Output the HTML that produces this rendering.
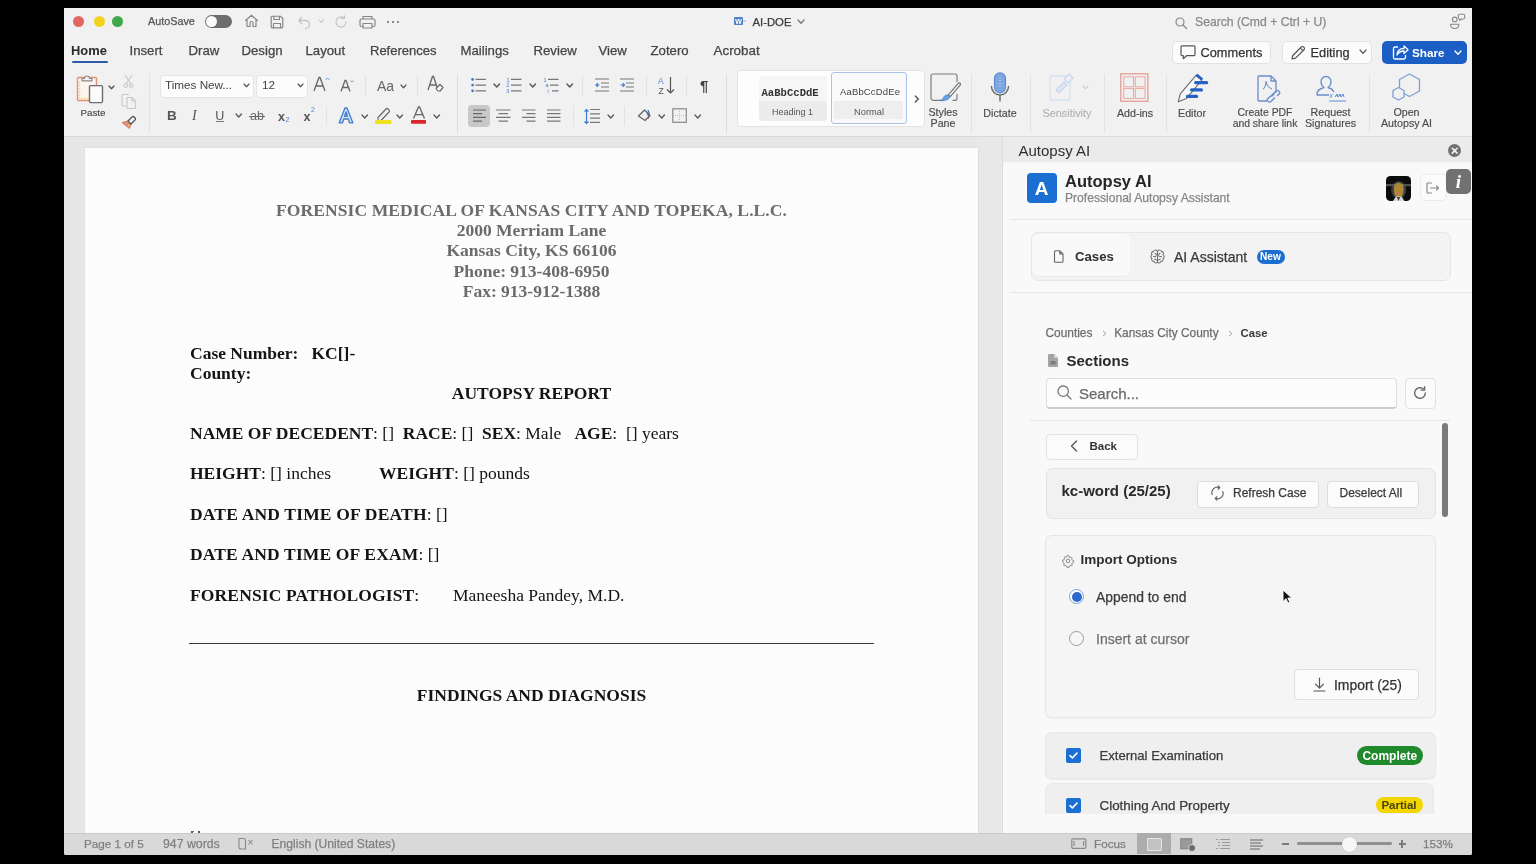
<!DOCTYPE html>
<html><head><meta charset="utf-8">
<style>
html,body{margin:0;padding:0;}
body{width:1536px;height:864px;overflow:hidden;background:#000;position:relative;font-family:"Liberation Sans",sans-serif;}
.a{position:absolute;}
.t{position:absolute;white-space:nowrap;font-family:"Liberation Sans",sans-serif;}
.s{position:absolute;white-space:pre;font-family:"Liberation Serif",serif;font-size:17.5px;line-height:20px;color:#141414;}
.s b{font-weight:bold;}
svg{position:absolute;overflow:visible;}
.sep{position:absolute;width:1px;background:#dcdcdc;}
.lbl{position:absolute;white-space:nowrap;font-size:10.7px;line-height:12px;color:#4a4a4a;text-align:center;-webkit-text-stroke:0.15px currentColor;}
.chev{position:absolute;}
.m{-webkit-text-stroke:0.25px currentColor;}
.m2{-webkit-text-stroke:0.15px currentColor;}
#root{position:absolute;left:0;top:0;width:1536px;height:864px;will-change:transform;}
</style></head><body><div id="root">
<!-- window -->
<div class="a" id="win" style="left:64px;top:8px;width:1408px;height:847px;background:#f1f1f1;border-radius:0 0 2px 2px;overflow:hidden;"></div>

<!-- ===== TITLE BAR ===== -->
<div class="a" style="left:73px;top:16px;width:11px;height:11px;border-radius:50%;background:#e0443e;opacity:.8"></div>
<div class="a" style="left:93.5px;top:16px;width:11px;height:11px;border-radius:50%;background:#f4d320;"></div>
<div class="a" style="left:112px;top:16px;width:11px;height:11px;border-radius:50%;background:#3fa84a;"></div>
<div class="t m" style="left:148px;top:15px;font-size:10.8px;line-height:13px;color:#555;">AutoSave</div>
<div class="t m" style="left:752.5px;top:14.5px;font-size:11.3px;line-height:14px;color:#3c3c3c;">AI-DOE</div>
<div class="t m" style="left:1195px;top:14.5px;font-size:12.2px;line-height:14px;color:#8a8a8a;">Search (Cmd + Ctrl + U)</div>

<!-- ===== TABS ===== -->
<div class="t" style="left:71px;top:42.5px;font-size:12.9px;line-height:15px;color:#2a2a2a;font-weight:bold;">Home</div>
<div class="a" style="left:71.5px;top:60.5px;width:36px;height:2.5px;background:#2e5aa8;border-radius:1px;"></div>
<div class="t m" style="left:129.5px;top:42.5px;font-size:13.2px;line-height:15px;color:#444;">Insert</div>
<div class="t m" style="left:188.5px;top:42.5px;font-size:13.2px;line-height:15px;color:#444;">Draw</div>
<div class="t m" style="left:241.5px;top:42.5px;font-size:13.2px;line-height:15px;color:#444;">Design</div>
<div class="t m" style="left:305.5px;top:42.5px;font-size:13.2px;line-height:15px;color:#444;">Layout</div>
<div class="t m" style="left:370px;top:42.5px;font-size:13px;line-height:15px;color:#444;">References</div>
<div class="t m" style="left:460.5px;top:42.5px;font-size:13.2px;line-height:15px;color:#444;">Mailings</div>
<div class="t m" style="left:533.5px;top:42.5px;font-size:13.2px;line-height:15px;color:#444;">Review</div>
<div class="t m" style="left:598.5px;top:42.5px;font-size:13.2px;line-height:15px;color:#444;">View</div>
<div class="t m" style="left:650.5px;top:42.5px;font-size:13.2px;line-height:15px;color:#444;">Zotero</div>
<div class="t m" style="left:713.5px;top:42.5px;font-size:13.4px;line-height:15px;color:#444;">Acrobat</div>

<!-- buttons top right -->
<div class="a" style="left:1172px;top:41px;width:97px;height:21px;background:#fbfbfb;border:1px solid #e2e2e2;border-radius:5px;"></div>
<div class="t m" style="left:1200.5px;top:44.5px;font-size:12.8px;line-height:15px;color:#333;">Comments</div>
<div class="a" style="left:1282px;top:41px;width:88px;height:21px;background:#fbfbfb;border:1px solid #e2e2e2;border-radius:5px;"></div>
<div class="t m" style="left:1310.5px;top:44.5px;font-size:12.8px;line-height:15px;color:#333;">Editing</div>
<div class="a" style="left:1382px;top:40.5px;width:85px;height:23px;background:#1c5fc4;border-radius:5px;"></div>
<div class="t" style="left:1412px;top:44.5px;font-size:11.7px;line-height:15px;color:#fff;font-weight:bold;">Share</div>


<!-- ===== RIBBON ===== -->
<div class="a" style="left:204.5px;top:15px;width:27px;height:13px;border-radius:7px;background:#6d6d6d;"></div>
<div class="a" style="left:205.5px;top:16px;width:11px;height:11px;border-radius:50%;background:#fafafa;"></div>
<svg style="left:244px;top:14px" width="15" height="14" viewBox="0 0 15 14"><path d="M1.5 6.5L7.5 1.2l6 5.3M3 5.3V12.5h3V9a1.5 1.5 0 0 1 3 0v3.5h3V5.3" fill="none" stroke="#858585" stroke-width="1.15" stroke-linejoin="round" stroke-linecap="round"/></svg>
<svg style="left:270px;top:14.5px" width="14" height="14" viewBox="0 0 14 14"><path d="M1.2 2.2a1 1 0 0 1 1-1h8.3l2.3 2.3v8.3a1 1 0 0 1-1 1H2.2a1 1 0 0 1-1-1z M4 1.2v3.3h5.5V1.2 M3.5 12.8V8.5h7v4.3" fill="none" stroke="#858585" stroke-width="1.15" stroke-linejoin="round"/></svg>
<svg style="left:296.5px;top:14.5px" width="14" height="14" viewBox="0 0 14 14"><path d="M2 5.5h6.5a4 4 0 0 1 0 8M4.5 2.5L1.8 5.5l2.7 3" fill="none" stroke="#c4c4c4" stroke-width="1.3" stroke-linejoin="round" stroke-linecap="round"/></svg>

<svg style="left:318px;top:19.2625px" width="6.5" height="4.475" viewBox="-1 -1 6.5 4.475"><path d="M0 0L2.25 2.475L4.5 0" fill="none" stroke="#c4c4c4" stroke-width="1.1" stroke-linecap="round" stroke-linejoin="round"/></svg>
<svg style="left:334px;top:14.5px" width="14" height="14" viewBox="0 0 14 14"><path d="M12 7A5 5 0 1 1 10 3M10.5 .8v2.8H7.7" fill="none" stroke="#c8c8c8" stroke-width="1.3" stroke-linejoin="round" stroke-linecap="round"/></svg>
<svg style="left:358.5px;top:14.5px" width="17" height="14" viewBox="0 0 17 14"><path d="M4 4V1.5h9V4M2.5 4h12a1.5 1.5 0 0 1 1.5 1.5v4.5a1.5 1.5 0 0 1-1.5 1.5H13M4 11.5H2.5A1.5 1.5 0 0 1 1 10V5.5A1.5 1.5 0 0 1 2.5 4M4 8.5h9v4.5H4z" fill="none" stroke="#858585" stroke-width="1.2" stroke-linejoin="round"/></svg>
<div class="a" style="left:386.5px;top:20.5px;width:2.2px;height:2.2px;border-radius:50%;background:#666;box-shadow:5px 0 0 #666,10px 0 0 #666;"></div>
<svg style="left:734px;top:17px" width="14" height="9" viewBox="0 0 14 9"><rect x="0" y="0" width="9" height="8" rx="1" fill="#4f82c8"/><text x="4.5" y="6.8" font-size="7" font-family="Liberation Sans" fill="#fff" text-anchor="middle" font-weight="bold">W</text><path d="M9 4h3" stroke="#9bb6de" stroke-width="1"/></svg>

<svg style="left:796.5px;top:19.150000000000002px" width="8" height="5.300000000000001" viewBox="-1 -1 8 5.300000000000001"><path d="M0 0L3.0 3.3000000000000003L6 0" fill="none" stroke="#777" stroke-width="1.3" stroke-linecap="round" stroke-linejoin="round"/></svg>
<svg style="left:1175px;top:16.5px" width="13" height="12" viewBox="0 0 13 12"><circle cx="5" cy="5" r="4" fill="none" stroke="#888" stroke-width="1.2"/><path d="M8 8l3.5 3.5" stroke="#888" stroke-width="1.3" stroke-linecap="round"/></svg>
<svg style="left:1449px;top:13px" width="18" height="17" viewBox="0 0 18 17"><g fill="none" stroke="#8a8a8a" stroke-width="1.1" stroke-linejoin="round"><circle cx="5.7" cy="6.4" r="2.3"/><path d="M1.5 11.2h8.4q0 4.3-4.2 4.3t-4.2-4.3z"/><path d="M9.3 2.6q0-1.4 1.4-1.4h3.6q1.4 0 1.4 1.4v2q0 1.4-1.4 1.4h-1.9l-1.7 1.5v-1.5q-1.4 0-1.4-1.4z"/></g></svg>

<svg style="left:1180px;top:45px" width="16" height="15" viewBox="0 0 16 15"><path d="M1 2a1.2 1.2 0 0 1 1.2-1.2h11.6A1.2 1.2 0 0 1 15 2v7.5a1.2 1.2 0 0 1-1.2 1.2H6.5L3.3 13.7V10.7H2.2A1.2 1.2 0 0 1 1 9.5z" fill="none" stroke="#555" stroke-width="1.2" stroke-linejoin="round"/></svg>
<svg style="left:1290px;top:44.5px" width="16" height="16" viewBox="0 0 16 16"><path d="M2 14l.8-3.5L11.3 2a1.6 1.6 0 0 1 2.3 0l.4.4a1.6 1.6 0 0 1 0 2.3L5.5 13.2zM10.3 3l2.7 2.7" fill="none" stroke="#555" stroke-width="1.2" stroke-linejoin="round"/></svg>

<svg style="left:1358.5px;top:49.35px" width="8" height="5.300000000000001" viewBox="-1 -1 8 5.300000000000001"><path d="M0 0L3.0 3.3000000000000003L6 0" fill="none" stroke="#555" stroke-width="1.2" stroke-linecap="round" stroke-linejoin="round"/></svg>
<svg style="left:1391.5px;top:44px" width="17" height="16" viewBox="0 0 17 16"><path d="M6 3H3a1.5 1.5 0 0 0-1.5 1.5v9A1.5 1.5 0 0 0 3 15h9a1.5 1.5 0 0 0 1.5-1.5V11" fill="none" stroke="#fff" stroke-width="1.3" stroke-linejoin="round"/><path d="M5 11c0-4 2.5-6.5 7-6.5V2l4 3.8-4 3.8V7c-3 0-5.2.8-7 4z" fill="none" stroke="#fff" stroke-width="1.3" stroke-linejoin="round"/></svg>

<svg style="left:1454px;top:49.85px" width="8" height="5.300000000000001" viewBox="-1 -1 8 5.300000000000001"><path d="M0 0L3.0 3.3000000000000003L6 0" fill="none" stroke="#fff" stroke-width="1.3" stroke-linecap="round" stroke-linejoin="round"/></svg>
<svg style="left:76px;top:73px" width="40" height="31" viewBox="0 0 40 31"><rect x="1.5" y="4.5" width="19" height="23" rx="1" fill="#fdf3f0" stroke="#e1907e" stroke-width="1.4"/><path d="M3.5 9v16.5h11" fill="none" stroke="#e8e04a" stroke-width="1.4" stroke-dasharray="1.5 1.5"/><path d="M6 7.8V5.5h2.5a2.5 2.5 0 0 1 5 0H16v2.3z" fill="#f4f4f4" stroke="#8a8a8a" stroke-width="1.2" stroke-linejoin="round"/><rect x="13.5" y="12.6" width="13" height="17" rx="1" fill="#fbfbfb" stroke="#6e6e6e" stroke-width="1.4"/></svg>
<svg style="left:107.8px;top:85.425px" width="7" height="4.75" viewBox="-1 -1 7 4.75"><path d="M0 0L2.5 2.75L5 0" fill="none" stroke="#555" stroke-width="1.3" stroke-linecap="round" stroke-linejoin="round"/></svg>
<div class="lbl" style="left:70px;top:107px;width:46px;font-size:9.8px;">Paste</div>
<svg style="left:123px;top:73.5px" width="11" height="14" viewBox="0 0 11 14"><g fill="none" stroke="#c7c7c7" stroke-width="1.1"><path d="M2 1l6 9M9 1L3 10"/><circle cx="2.8" cy="11.5" r="1.8"/><circle cx="8.2" cy="11.5" r="1.8"/></g></svg>
<svg style="left:121px;top:93px" width="16" height="16" viewBox="0 0 16 16"><g fill="none" stroke="#c7c7c7" stroke-width="1.1" stroke-linejoin="round"><path d="M7 2.5V1.5H2a1 1 0 0 0-1 1v9.5a1 1 0 0 0 1 1h3"/><path d="M6 4.5h5l3.5 3.5v6.5a1 1 0 0 1-1 1H7a1 1 0 0 1-1-1z"/><path d="M11 4.5V8h3.5"/></g></svg>
<svg style="left:121px;top:114px" width="16" height="15" viewBox="0 0 16 15"><path d="M1 8.5l6-1.5 3 3-1.5 4.5z" fill="#e1907e" stroke="#d77a68" stroke-width="1"/><path d="M7 7l4-4a1.5 1.5 0 0 1 2.2 0l.8.8a1.5 1.5 0 0 1 0 2.2L10 10z" fill="none" stroke="#555" stroke-width="1.3" stroke-linejoin="round"/><circle cx="7.8" cy="11.5" r=".8" fill="#f0e040"/></svg>
<div class="sep" style="left:149px;top:74px;height:59px;background:#e2e2e2;"></div>
<div class="a" style="left:159.5px;top:74.5px;width:92px;height:21px;background:#fcfcfc;border:1px solid #e4e4e4;border-radius:4px;"></div>
<div class="t" style="left:165px;top:78px;font-size:11.7px;line-height:14px;color:#444;">Times New...</div>
<svg style="left:242.5px;top:83.125px" width="7" height="4.75" viewBox="-1 -1 7 4.75"><path d="M0 0L2.5 2.75L5 0" fill="none" stroke="#555" stroke-width="1.2" stroke-linecap="round" stroke-linejoin="round"/></svg>
<div class="a" style="left:256px;top:74.5px;width:50px;height:21px;background:#fcfcfc;border:1px solid #e4e4e4;border-radius:4px;"></div>
<div class="t" style="left:262px;top:78px;font-size:11.7px;line-height:14px;color:#444;">12</div>
<svg style="left:296.5px;top:83.125px" width="7" height="4.75" viewBox="-1 -1 7 4.75"><path d="M0 0L2.5 2.75L5 0" fill="none" stroke="#555" stroke-width="1.2" stroke-linecap="round" stroke-linejoin="round"/></svg>
<svg style="left:313px;top:76px" width="17" height="16" viewBox="0 0 17 16"><path d="M1 15L6 1.5h1L12 15M3 10h7" fill="none" stroke="#666" stroke-width="1.3"/><path d="M12.5 4l2-2 2 2" fill="none" stroke="#6a9ad8" stroke-width="1"/></svg>
<svg style="left:340px;top:79px" width="14" height="13" viewBox="0 0 14 13"><path d="M1 12.5L5 1.5h1l4 11M2.7 8.5h5.6" fill="none" stroke="#666" stroke-width="1.3"/><path d="M10.5 1.5l1.5 1.5 1.5-1.5" fill="none" stroke="#6a9ad8" stroke-width="1"/></svg>
<div class="sep" style="left:365px;top:76px;height:20px;background:#e2e2e2;"></div>
<div class="t" style="left:377px;top:78px;font-size:14px;line-height:16px;color:#666;">Aa</div>
<svg style="left:399.5px;top:83.625px" width="7" height="4.75" viewBox="-1 -1 7 4.75"><path d="M0 0L2.5 2.75L5 0" fill="none" stroke="#555" stroke-width="1.2" stroke-linecap="round" stroke-linejoin="round"/></svg>
<div class="sep" style="left:416.5px;top:76px;height:20px;background:#e2e2e2;"></div>
<svg style="left:427px;top:75px" width="17" height="18" viewBox="0 0 17 18"><path d="M1 15L5.5 1.5h1L11 15M2.8 10H9" fill="none" stroke="#666" stroke-width="1.3"/><path d="M9 13.5l4-4 3 3-3 3.5h-2z" fill="#fafafa" stroke="#666" stroke-width="1.2" stroke-linejoin="round"/></svg>
<div class="sep" style="left:456.5px;top:74.5px;height:58.5px;background:#dcdcdc;"></div>
<svg style="left:471px;top:77px" width="16" height="16" viewBox="0 0 16 16"><g fill="#3f79cc"><circle cx="1.6" cy="2.4" r="1.4"/><circle cx="1.6" cy="8.1" r="1.4"/><circle cx="1.6" cy="13.8" r="1.4"/></g><g stroke="#777" stroke-width="1.2"><path d="M4.5 2.4H15M4.5 8.1H15M4.5 13.8H15"/></g></svg>
<svg style="left:506px;top:77px" width="16" height="17" viewBox="0 0 16 17"><g fill="#3f79cc" font-family="Liberation Sans" font-size="5.5"><text x="0.5" y="4.5">1</text><text x="0.3" y="10.2">2</text><text x="0.3" y="15.9">3</text></g><g stroke="#777" stroke-width="1.2"><path d="M5 2.4H15.5M5 8.1H15.5M5 13.8H15.5"/></g></svg>
<svg style="left:543px;top:77px" width="16" height="17" viewBox="0 0 16 17"><g fill="#3f79cc" font-family="Liberation Sans" font-size="5.5"><text x="0.5" y="4.5">1</text><text x="2.5" y="10.2">a</text><text x="4.5" y="15.9">i</text></g><g stroke="#777" stroke-width="1.2"><path d="M5 2.4H15.5M7 8.1H15.5M9 13.8H15.5"/></g></svg>
<svg style="left:493px;top:83.4875px" width="7.5" height="5.025" viewBox="-1 -1 7.5 5.025"><path d="M0 0L2.75 3.0250000000000004L5.5 0" fill="none" stroke="#555" stroke-width="1.4" stroke-linecap="round" stroke-linejoin="round"/></svg>
<svg style="left:528.5px;top:83.4875px" width="7.5" height="5.025" viewBox="-1 -1 7.5 5.025"><path d="M0 0L2.75 3.0250000000000004L5.5 0" fill="none" stroke="#555" stroke-width="1.4" stroke-linecap="round" stroke-linejoin="round"/></svg>
<svg style="left:565.5px;top:83.4875px" width="7.5" height="5.025" viewBox="-1 -1 7.5 5.025"><path d="M0 0L2.75 3.0250000000000004L5.5 0" fill="none" stroke="#555" stroke-width="1.4" stroke-linecap="round" stroke-linejoin="round"/></svg>
<div class="sep" style="left:582.3px;top:76px;height:20px;background:#e2e2e2;"></div>
<svg style="left:595px;top:78px" width="15" height="14" viewBox="0 0 15 14"><g stroke="#777" stroke-width="1.2"><path d="M0 1H14M6 5H14M6 9H14M0 13H14"/></g><path d="M4.5 7H1M2.8 5.2L1 7l1.8 1.8" fill="none" stroke="#3f79cc" stroke-width="1.2"/></svg>
<svg style="left:620px;top:78px" width="15" height="14" viewBox="0 0 15 14"><g stroke="#777" stroke-width="1.2"><path d="M0 1H14M6 5H14M6 9H14M0 13H14"/></g><path d="M0.5 7H4.5M2.7 5.2L4.5 7l-1.8 1.8" fill="none" stroke="#3f79cc" stroke-width="1.2"/></svg>
<div class="sep" style="left:646px;top:76px;height:20px;background:#e2e2e2;"></div>
<svg style="left:658px;top:76px" width="17" height="19" viewBox="0 0 17 19"><g font-family="Liberation Sans" font-size="8.5"><text x="0" y="8" fill="#4f86d0">A</text><text x="0.5" y="17.5" fill="#555">Z</text></g><path d="M12.5 1v16M9 13.5l3.5 3.5 3.5-3.5" fill="none" stroke="#555" stroke-width="1.2"/></svg>

<div class="sep" style="left:685.5px;top:76px;height:20px;background:#e2e2e2;"></div>
<div class="t" style="left:700px;top:77px;font-size:15px;line-height:17px;color:#444;font-weight:bold;">¶</div>
<div class="sep" style="left:726.3px;top:74.5px;height:58.5px;background:#dcdcdc;"></div>
<div class="t" style="left:167px;top:108px;font-size:13.5px;line-height:16px;color:#555;font-weight:bold;">B</div>
<div class="t" style="left:192px;top:108px;font-family:'Liberation Serif',serif;font-size:14px;line-height:16px;color:#555;font-style:italic;">I</div>
<div class="t" style="left:215.3px;top:108px;font-size:12.5px;line-height:16px;color:#555;">U</div><div class="a" style="left:215.5px;top:121px;width:8.5px;height:1px;background:#777;"></div>
<svg style="left:234.5px;top:113.4875px" width="7.5" height="5.025" viewBox="-1 -1 7.5 5.025"><path d="M0 0L2.75 3.0250000000000004L5.5 0" fill="none" stroke="#555" stroke-width="1.3" stroke-linecap="round" stroke-linejoin="round"/></svg>
<div class="t" style="left:250px;top:107.5px;font-size:12.5px;line-height:16px;color:#666;">ab</div><div class="a" style="left:248.5px;top:116px;width:16px;height:1.1px;background:#666;"></div>
<div class="t" style="left:278px;top:108.5px;font-size:12.5px;line-height:16px;color:#555;font-weight:bold;">x</div><div class="t" style="left:285.5px;top:116px;font-size:7px;line-height:8px;color:#4f86d0;">2</div>
<div class="t" style="left:303.5px;top:108.5px;font-size:12.5px;line-height:16px;color:#555;font-weight:bold;">x</div><div class="t" style="left:311px;top:106px;font-size:7px;line-height:8px;color:#4f86d0;">2</div>
<div class="sep" style="left:326px;top:106px;height:20px;background:#e2e2e2;"></div>
<svg style="left:338px;top:107px" width="16" height="17" viewBox="0 0 16 17"><path d="M1.2 15.8L7 1h2l5.8 14.8h-3.3L10.3 12H5.7l-1.2 3.8zM6.6 9.3h2.8L8 5z" fill="#d4e3f6" stroke="#3f79cc" stroke-width="1.3" stroke-linejoin="round"/></svg>
<svg style="left:360.5px;top:113.9875px" width="7.5" height="5.025" viewBox="-1 -1 7.5 5.025"><path d="M0 0L2.75 3.0250000000000004L5.5 0" fill="none" stroke="#555" stroke-width="1.3" stroke-linecap="round" stroke-linejoin="round"/></svg>
<svg style="left:375px;top:106px" width="18" height="19" viewBox="0 0 18 19"><path d="M3 11.5l8-8.5a1.5 1.5 0 0 1 2.1 0l.9.9a1.5 1.5 0 0 1 0 2.1L6 14.5H3z" fill="none" stroke="#666" stroke-width="1.2" stroke-linejoin="round"/><rect x="0" y="14" width="16.5" height="4" rx="1" fill="#f0e11f"/></svg>
<svg style="left:396px;top:113.9875px" width="7.5" height="5.025" viewBox="-1 -1 7.5 5.025"><path d="M0 0L2.75 3.0250000000000004L5.5 0" fill="none" stroke="#555" stroke-width="1.3" stroke-linecap="round" stroke-linejoin="round"/></svg>
<svg style="left:411px;top:106px" width="16" height="19" viewBox="0 0 16 19"><path d="M2.5 12.5L7.5 1h1l5 11.5M4.3 8.6h7.4" fill="none" stroke="#666" stroke-width="1.3"/><rect x="0" y="14" width="15" height="3.8" rx=".8" fill="#d9282b"/></svg>
<svg style="left:432.5px;top:113.9875px" width="7.5" height="5.025" viewBox="-1 -1 7.5 5.025"><path d="M0 0L2.75 3.0250000000000004L5.5 0" fill="none" stroke="#555" stroke-width="1.3" stroke-linecap="round" stroke-linejoin="round"/></svg>
<div class="a" style="left:467.5px;top:105px;width:22.5px;height:22px;border-radius:4px;background:#c8c8c8;"></div>
<svg style="left:472.5px;top:109px" width="14" height="14" viewBox="0 0 14 14"><g stroke="#666" stroke-width="1.2"><path d="M0 1H13M0 4.7H9M0 8.4H13M0 12.1H9"/></g></svg>
<svg style="left:496px;top:109px" width="15" height="14" viewBox="0 0 15 14"><g stroke="#777" stroke-width="1.2"><path d="M0 1H14.5M2.5 4.7H12M0 8.4H14.5M2.5 12.1H12"/></g></svg>
<svg style="left:521.5px;top:109px" width="14" height="14" viewBox="0 0 14 14"><g stroke="#777" stroke-width="1.2"><path d="M0 1H13.5M4.5 4.7H13.5M0 8.4H13.5M4.5 12.1H13.5"/></g></svg>
<svg style="left:546.5px;top:109px" width="14" height="14" viewBox="0 0 14 14"><g stroke="#777" stroke-width="1.2"><path d="M0 1H13.5M0 4.7H13.5M0 8.4H13.5M0 12.1H13.5"/></g></svg>
<div class="sep" style="left:573px;top:106px;height:20px;background:#e2e2e2;"></div>
<svg style="left:584px;top:108px" width="17" height="17" viewBox="0 0 17 17"><g stroke="#777" stroke-width="1.2"><path d="M6 1.5H16M6 5.8H16M6 10.1H16M6 14.4H16"/></g><path d="M2.5 1.5v14M.5 3.5l2-2 2 2M.5 13.5l2 2 2-2" fill="none" stroke="#3f79cc" stroke-width="1.2"/></svg>
<svg style="left:607px;top:113.9875px" width="7.5" height="5.025" viewBox="-1 -1 7.5 5.025"><path d="M0 0L2.75 3.0250000000000004L5.5 0" fill="none" stroke="#555" stroke-width="1.3" stroke-linecap="round" stroke-linejoin="round"/></svg>
<div class="sep" style="left:623.8px;top:106px;height:20px;background:#e2e2e2;"></div>
<svg style="left:636.5px;top:107px" width="15" height="17" viewBox="0 0 15 17"><path d="M1.5 9l6-6 5.5 5.5-5 5z" fill="none" stroke="#666" stroke-width="1.3" stroke-linejoin="round"/><path d="M11 3l1.5 4.5" stroke="#3f79cc" stroke-width="1.3"/><path d="M10 6.5q3 3 1 5" fill="none" stroke="#666" stroke-width="1.2"/></svg>
<svg style="left:657.5px;top:113.9875px" width="7.5" height="5.025" viewBox="-1 -1 7.5 5.025"><path d="M0 0L2.75 3.0250000000000004L5.5 0" fill="none" stroke="#555" stroke-width="1.3" stroke-linecap="round" stroke-linejoin="round"/></svg>
<svg style="left:671.5px;top:108px" width="16" height="16" viewBox="0 0 16 16"><rect x=".8" y=".8" width="13.5" height="13.5" fill="none" stroke="#888" stroke-width="1.2"/><path d="M7.5 1v13M1 7.5h13" stroke="#bbb" stroke-width="1" stroke-dasharray="1 1"/></svg>
<svg style="left:693.5px;top:113.9875px" width="7.5" height="5.025" viewBox="-1 -1 7.5 5.025"><path d="M0 0L2.75 3.0250000000000004L5.5 0" fill="none" stroke="#555" stroke-width="1.3" stroke-linecap="round" stroke-linejoin="round"/></svg>

<div class="a" style="left:737px;top:70px;width:186px;height:54.5px;background:#fdfdfd;border:1px solid #e3e3e3;border-radius:4px;"></div>
<div class="a" style="left:758.5px;top:76px;width:68px;height:45px;border-radius:3px;background:linear-gradient(#f6f6f6 0,#f6f6f6 55%,#ececec 55%,#ececec 100%);"></div>
<div class="t" style="left:758.5px;top:86.5px;width:68px;overflow:hidden;text-align:left;font-family:'Liberation Mono',monospace;font-weight:bold;font-size:10.6px;line-height:13px;color:#333;text-indent:3px;">AaBbCcDdE</div>
<div class="t" style="left:758.5px;top:106px;width:68px;text-align:center;font-size:9px;line-height:12px;color:#555;">Heading 1</div>
<div class="a" style="left:831px;top:72px;width:74px;height:49.5px;border-radius:3px;border:1.3px solid #a9c3e6;background:#f9f9f9;"></div>
<div class="a" style="left:834px;top:75px;width:69px;height:44px;border-radius:2px;background:linear-gradient(#fafafa 0,#fafafa 60%,#eeeeee 60%,#eeeeee 100%);"></div>
<div class="t" style="left:840px;top:85px;font-size:9.5px;line-height:13px;color:#444;letter-spacing:.15px;">AaBbCcDdEe</div>
<div class="t" style="left:831px;top:106px;width:76px;text-align:center;font-size:9.3px;line-height:12px;color:#555;">Normal</div>
<svg style="left:913.5px;top:94.5px" width="6" height="8" viewBox="0 0 6 8"><path d="M1.3 1l3 3-3 3" fill="none" stroke="#555" stroke-width="1.4" stroke-linecap="round"/></svg>
<svg style="left:929.5px;top:73px" width="32" height="31" viewBox="0 0 32 31"><path d="M14 27.3H3a2 2 0 0 1-2-2V3a2 2 0 0 1 2-2h22a2 2 0 0 1 2 2v6M27 21v4.3a2 2 0 0 1-2 2h-2.5" fill="none" stroke="#7a7a7a" stroke-width="1.15"/><path d="M28.2 10.3a1.3 1.3 0 0 1 1.9 1.8L20.3 23.6l-1.9-1.7z" fill="#f6f6f6" stroke="#6e6e6e" stroke-width="1.1" stroke-linejoin="round"/><path d="M18.3 21.9l2 1.8c-1.5 3-5 4.5-10.5 4 1.8-.6 2.8-1.8 3.6-3.3.9-1.7 2.7-2.8 4.9-2.5z" fill="#6b9fdd" stroke="#4f86d0" stroke-width=".7"/></svg>
<div class="lbl" style="left:920px;top:106.5px;width:46px;line-height:11.8px;">Styles<br>Pane</div>
<div class="sep" style="left:971px;top:74px;height:59px;background:#e2e2e2;"></div>
<svg style="left:990px;top:72px" width="20" height="30" viewBox="0 0 20 30"><rect x="4.5" y=".8" width="11" height="20" rx="5.5" fill="#7da7de" stroke="#5a8fd4" stroke-width="1.2"/><path d="M10 5v12" stroke="#cfe0f5" stroke-width="1" stroke-dasharray="1 2"/><path d="M1.5 14.5a8.5 8.5 0 0 0 17 0M10 23v6" fill="none" stroke="#6a6a6a" stroke-width="1.4" stroke-linecap="round"/></svg>
<div class="lbl" style="left:977px;top:107px;width:46px;">Dictate</div>
<div class="sep" style="left:1030.2px;top:74px;height:59px;background:#e2e2e2;"></div>
<svg style="left:1049px;top:73px" width="28" height="28" viewBox="0 0 28 28"><rect x="1" y="3" width="20" height="24" rx="1" fill="none" stroke="#d6e2f2" stroke-width="1.3"/><path d="M7 17l8-8 3 3-8 8z" fill="#dde6f3" stroke="#c8d6ea" stroke-width="1.2"/><path d="M15 6l5-5 4 4-5 5z" fill="#eef2f8" stroke="#c8d6ea" stroke-width="1.2"/></svg>
<svg style="left:1081.5px;top:85.125px" width="7" height="4.75" viewBox="-1 -1 7 4.75"><path d="M0 0L2.5 2.75L5 0" fill="none" stroke="#c7c7c7" stroke-width="1.1" stroke-linecap="round" stroke-linejoin="round"/></svg>
<div class="lbl" style="left:1042px;top:107px;width:50px;color:#b3b3b3;font-size:10.9px;">Sensitivity</div>
<div class="sep" style="left:1104.2px;top:74px;height:59px;background:#e2e2e2;"></div>
<svg style="left:1120px;top:73px" width="29" height="29" viewBox="0 0 29 29"><rect x=".8" y=".8" width="27" height="27.5" fill="none" stroke="#e6a49b" stroke-width="1.4"/><g fill="none" stroke="#e9ada5" stroke-width="1.1"><rect x="3.8" y="3.8" width="9.7" height="10"/><rect x="15.3" y="3.8" width="9.7" height="10"/><rect x="3.8" y="15.5" width="9.7" height="10"/><rect x="15.3" y="15.5" width="9.7" height="10"/></g></svg>
<div class="lbl" style="left:1112px;top:107px;width:46px;">Add-ins</div>
<div class="sep" style="left:1166.2px;top:74px;height:59px;background:#e2e2e2;"></div>
<svg style="left:1177px;top:73px" width="32" height="30" viewBox="0 0 32 30"><path d="M1.3 28.7l2-7.8L19.2 2.2l5.8 4.6L9.3 25.6z" fill="#f9f9f9" stroke="#6b6b6b" stroke-width="1.1" stroke-linejoin="round"/><path d="M18.5 3l2-2.2 5.6 4.6-1.9 2.2z" fill="#2561c4"/><path d="M18.7 9.7H29.6M14.6 16.9H24.4M10.5 23.4H19.6" stroke="#2561c4" stroke-width="3.3" stroke-linecap="round"/></svg>
<div class="lbl" style="left:1169px;top:107px;width:46px;">Editor</div>
<svg style="left:1256px;top:74.5px" width="26" height="29" viewBox="0 0 26 29"><path d="M2 2a1 1 0 0 1 1-1h12l5 5v12M20 6h-5V1M11 26H3a1 1 0 0 1-1-1V2" fill="none" stroke="#6b8fcb" stroke-width="1.3" stroke-linejoin="round"/><path d="M7 14q3-2 3-8q1 6 6 8" fill="none" stroke="#6b8fcb" stroke-width="1.1"/><g fill="none" stroke="#6b8fcb" stroke-width="1.4"><path d="M14 22l6-6a2.2 2.2 0 0 1 3.1 3.1l-2 2"/><path d="M19 22.5l-4 4a2.2 2.2 0 0 1-3.1-3.1l2-2"/><path d="M15.5 21.5l3-3"/></g></svg>
<div class="lbl" style="left:1230px;top:107px;width:70px;line-height:11.2px;font-size:10.4px;">Create PDF<br>and share link</div>
<svg style="left:1315px;top:74.5px" width="33" height="28" viewBox="0 0 33 28"><path d="M11 1.5a5 5 0 0 1 5 5c0 3-1.5 5-3 6 3 .8 5 2.5 6 4.5M11 1.5a5 5 0 0 0-5 5c0 3 1.5 5 3 6-4 1-7 3.5-7 7v.5h12" fill="none" stroke="#6b8fcb" stroke-width="1.3" stroke-linejoin="round"/><text x="14.5" y="22.5" font-family="Liberation Sans" font-size="6.5" font-style="italic" fill="#4f7fd0">x</text><path d="M20 22l2-3 1 3 2-3 1 3 2-3 1 3" fill="none" stroke="#4f7fd0" stroke-width="1"/><path d="M14 26H31" stroke="#7ea2de" stroke-width="1.3"/></svg>
<div class="lbl" style="left:1302px;top:107px;width:57px;line-height:11.2px;">Request<br>Signatures</div>
<div class="sep" style="left:1369.3px;top:74px;height:59px;background:#e2e2e2;"></div>
<svg style="left:1391px;top:73px" width="31" height="29" viewBox="0 0 31 29"><path d="M18.5 1l10 5.5v11.5l-10 5.5-10-5.5V6.5z" fill="none" stroke="#7e9fd6" stroke-width="1.3" stroke-linejoin="round"/><path d="M7.5 14.5l5.5 3v6.5L7.5 27 2 24v-6.5z" fill="#f2f2f2" stroke="#7e9fd6" stroke-width="1.3" stroke-linejoin="round"/></svg>
<div class="lbl" style="left:1376px;top:107px;width:61px;line-height:11.2px;">Open<br>Autopsy AI</div>

<!-- ribbon bottom line -->
<div class="a" style="left:64px;top:136px;width:1408px;height:1px;background:#dadada;"></div>

<!-- ===== DOC AREA ===== -->
<div class="a" style="left:64px;top:137px;width:939px;height:696px;background:#e7e7e7;"></div>
<div class="a" style="left:979px;top:137px;width:23px;height:696px;background:#e8e8e8;"></div>
<div class="a" style="left:85px;top:148px;width:893px;height:685px;background:#fcfcfc;box-shadow:0 0 1px #cfcfcf;"></div>


<div class="a" style="left:978px;top:147px;width:1px;height:686px;background:#dcdcdc;"></div>
<div class="a" style="left:84px;top:147px;width:1px;height:686px;background:#e2e2e2;"></div>
<div class="a" style="left:85px;top:147px;width:893px;height:1px;background:#e0e0e0;"></div>
<!-- ===== DOCUMENT TEXT ===== -->
<div class="s" style="left:85px;top:200px;width:893px;text-align:center;color:#6b6b6b;line-height:20.2px;"><b style="letter-spacing:.1px">FORENSIC MEDICAL OF KANSAS CITY AND TOPEKA, L.L.C.</b>
<b>2000 Merriam Lane</b>
<b>Kansas City, KS 66106</b>
<b>Phone: 913-408-6950</b>
<b>Fax: 913-912-1388</b></div>
<div class="s" style="left:190px;top:343px;"><b>Case Number:   KC[]-</b></div>
<div class="s" style="left:190px;top:363px;"><b>County:</b></div>
<div class="s" style="left:85px;top:383px;width:893px;text-align:center;"><b>AUTOPSY REPORT</b></div>
<div class="s" style="left:190px;top:423px;"><b>NAME OF DECEDENT</b>: []  <b>RACE</b>: []  <b>SEX</b>: Male   <b>AGE</b>:  [] years</div>
<div class="s" style="left:190px;top:463px;"><b>HEIGHT</b>: [] inches</div>
<div class="s" style="left:379px;top:463px;"><b>WEIGHT</b>: [] pounds</div>
<div class="s" style="left:190px;top:504px;"><b style="letter-spacing:.18px">DATE AND TIME OF DEATH</b>: []</div>
<div class="s" style="left:190px;top:544px;"><b style="letter-spacing:.15px">DATE AND TIME OF EXAM</b>: []</div>
<div class="s" style="left:190px;top:585px;"><b style="letter-spacing:.14px">FORENSIC PATHOLOGIST</b>:</div>
<div class="s" style="left:453px;top:585px;">Maneesha Pandey, M.D.</div>
<div class="a" style="left:189px;top:642.8px;width:685px;height:1.3px;background:#3a3a3a;"></div>
<div class="s" style="left:85px;top:685px;width:893px;text-align:center;"><b>FINDINGS AND DIAGNOSIS</b></div>

<!-- ===== PANE ===== -->
<div class="a" style="left:1003px;top:137px;width:469px;height:696px;background:#f9f9f9;"></div>
<div class="a" style="left:1003px;top:137px;width:469px;height:25px;background:#ebebeb;"></div>
<div class="a" style="left:1002px;top:137px;width:1px;height:696px;background:#dcdcdc;"></div>


<div class="t" style="left:1018.5px;top:143px;font-size:15px;line-height:16px;color:#2e2e2e;">Autopsy AI</div>
<div class="a" style="left:1448px;top:143.5px;width:13.4px;height:13.4px;border-radius:50%;background:#707070;"></div>
<svg style="left:1448px;top:143.5px" width="13.4" height="13.4" viewBox="0 0 13.4 13.4"><path d="M4.3 4.3L9.1 9.1M9.1 4.3L4.3 9.1" stroke="#f4f4f4" stroke-width="1.6" stroke-linecap="round"/></svg>

<!-- header -->
<div class="a" style="left:1026.5px;top:173px;width:30px;height:30px;border-radius:4px;background:#1b6fd2;"></div>
<div class="t" style="left:1026.5px;top:178px;width:30px;text-align:center;font-size:19px;line-height:22px;color:#fff;font-weight:bold;">A</div>
<div class="t" style="left:1065px;top:172px;font-size:16.5px;line-height:18px;color:#262626;font-weight:bold;">Autopsy AI</div>
<div class="t m" style="left:1065px;top:191px;font-size:12.1px;line-height:14px;color:#878787;">Professional Autopsy Assistant</div>
<svg style="left:1386px;top:175.5px" width="25" height="25" viewBox="0 0 25 25"><defs><clipPath id="av"><rect width="25" height="25" rx="4.5"/></clipPath></defs><g clip-path="url(#av)"><rect width="25" height="25" fill="#0c0c0c"/><ellipse cx="12.7" cy="14" rx="7.5" ry="9" fill="#3c3f44"/><rect x="0" y="8" width="25" height="2.2" fill="#5d6560" opacity=".8"/><path d="M8 12q0-5 4.7-5.2 4.8.2 4.8 5.2v4q-.5 5-4.8 5.5-4.3-.5-4.7-5.5z" fill="#a8892e"/><circle cx="9.5" cy="13" r=".9" fill="#d86a7a"/><circle cx="15.5" cy="13" r=".9" fill="#d86a7a"/><ellipse cx="11.8" cy="17.2" rx="1.3" ry="1.4" fill="#d86a7a"/><path d="M7 25l3-4.5h5.5l3 4.5z" fill="#d9d9d9"/><path d="M10.7 21l1.8 4 1.8-4z" fill="#444"/></g></svg>
<div class="a" style="left:1420px;top:174px;width:25px;height:25px;border-radius:5px;background:#fbfbfb;border:1px solid #ececec;"></div>
<svg style="left:1426px;top:182px" width="14" height="12" viewBox="0 0 14 12"><path d="M5.5 1H2a1 1 0 0 0-1 1v8a1 1 0 0 0 1 1h3.5M4.5 6h8M10.5 4l2 2-2 2" fill="none" stroke="#8a8a8a" stroke-width="1.2" stroke-linecap="round" stroke-linejoin="round"/></svg>
<div class="a" style="left:1446px;top:169px;width:25px;height:25px;border-radius:5px;background:#717171;"></div>
<div class="t" style="left:1446px;top:172px;width:25px;text-align:center;font-family:'Liberation Serif',serif;font-style:italic;font-weight:bold;font-size:19px;line-height:20px;color:#fff;">i</div>
<div class="a" style="left:1011px;top:219px;width:461px;height:1px;background:#e4e4e4;"></div>

<!-- tabs -->
<div class="a" style="left:1030.5px;top:232px;width:418px;height:47px;border:1px solid #e6e6e6;border-radius:7px;background:#f3f3f3;"></div>
<div class="a" style="left:1032px;top:234px;width:98px;height:42px;border-radius:6px;background:#f9f9f9;box-shadow:0 1px 1px rgba(0,0,0,.04);"></div>
<svg style="left:1053px;top:249.5px" width="11" height="13" viewBox="0 0 11 13"><path d="M1.5 1.8a1 1 0 0 1 1-1H6.8L10 4v7.2a1 1 0 0 1-1 1H2.5a1 1 0 0 1-1-1z M6.8 .8V4H10" fill="none" stroke="#666" stroke-width="1.1" stroke-linejoin="round"/></svg>
<div class="t" style="left:1075px;top:249px;font-size:13.2px;line-height:16px;color:#303030;font-weight:bold;">Cases</div>
<svg style="left:1149.5px;top:249px" width="15" height="15" viewBox="0 0 15 15"><g fill="none" stroke="#707070" stroke-width="1.05" stroke-linecap="round" stroke-linejoin="round"><path d="M7.5 2.3Q6.8.6 5 1 3.6 1.2 3.4 2.6 1.6 2.6 1.5 4.4 1.6 5.2 2 5.6.6 6.4.9 8.1 1.1 8.9 1.8 9.3 1.2 10.8 2.4 11.9 3.1 12.5 4 12.3 4.6 14 6.3 13.9 7.1 13.8 7.5 13 8 13.8 8.7 13.9 10.4 14 11 12.3 11.9 12.5 12.6 11.9 13.8 10.8 13.2 9.3 13.9 8.9 14.1 8.1 14.4 6.4 13 5.6 13.4 5.2 13.5 4.4 13.4 2.6 11.6 2.6 11.4 1.2 10 1 8.2.6 7.5 2.3z"/><path d="M7.5 2.3V13M5 4.2q1.3.3 1.3 1.8M10 4.2q-1.3.3-1.3 1.8M3.6 7.4q1.6.6 2.6-.4M11.4 7.4q-1.6.6-2.6-.4M4.6 10.3q1.3-.3 1.8.8M10.4 10.3q-1.3-.3-1.8.8"/></g></svg>
<div class="t m" style="left:1174px;top:249px;font-size:14px;line-height:16px;color:#3a3a3a;">AI Assistant</div>
<div class="a" style="left:1256.5px;top:249.5px;width:28px;height:14px;border-radius:7px;background:#1b6fd2;"></div>
<div class="t" style="left:1256.5px;top:250px;width:28px;text-align:center;font-size:10.2px;line-height:13px;color:#fff;font-weight:bold;">New</div>
<div class="a" style="left:1011px;top:292px;width:461px;height:1px;background:#e4e4e4;"></div>

<!-- breadcrumb -->
<div class="t m" style="left:1045.5px;top:326px;font-size:11.9px;line-height:14px;color:#6e6e6e;">Counties</div>
<svg style="left:1102px;top:329.5px" width="5" height="7" viewBox="0 0 5 7"><path d="M1 .8L3.8 3.5 1 6.2" fill="none" stroke="#9a9a9a" stroke-width="1"/></svg>
<div class="t m" style="left:1114.2px;top:326px;font-size:11.9px;line-height:14px;color:#6e6e6e;">Kansas City County</div>
<svg style="left:1228px;top:329.5px" width="5" height="7" viewBox="0 0 5 7"><path d="M1 .8L3.8 3.5 1 6.2" fill="none" stroke="#9a9a9a" stroke-width="1"/></svg>
<div class="t" style="left:1240.5px;top:326px;font-size:11.3px;line-height:14px;color:#3a3a3a;font-weight:bold;">Case</div>

<!-- sections -->
<svg style="left:1048px;top:354px" width="10" height="13" viewBox="0 0 10 13"><path d="M1.2 0h5L10 3.8V11.8a1.2 1.2 0 0 1-1.2 1.2H1.2A1.2 1.2 0 0 1 0 11.8V1.2A1.2 1.2 0 0 1 1.2 0z" fill="#a4a4a4"/><path d="M6 0v3a1 1 0 0 0 1 1h3" fill="#d8d8d8"/><rect x="2.5" y="7" width="5" height="3.5" fill="#7c7c7c"/></svg>
<div class="t" style="left:1066.5px;top:352px;font-size:15px;line-height:17px;color:#2a2a2a;font-weight:bold;">Sections</div>
<div class="a" style="left:1045.5px;top:377.5px;width:349px;height:28px;border:1px solid #dedede;border-bottom:2px solid #cdcdcd;border-radius:4px;background:#fcfcfc;"></div>
<svg style="left:1057px;top:385px" width="15" height="15" viewBox="0 0 15 15"><circle cx="6.2" cy="6.2" r="5.2" fill="none" stroke="#777" stroke-width="1.3"/><path d="M10 10l4 4" stroke="#777" stroke-width="1.3" stroke-linecap="round"/></svg>
<div class="t m" style="left:1079px;top:384.5px;font-size:15px;line-height:17px;color:#6a6a6a;">Search...</div>
<div class="a" style="left:1404.5px;top:377.5px;width:29px;height:29px;border:1px solid #e2e2e2;border-radius:4px;background:#fbfbfb;"></div>
<svg style="left:1411.5px;top:384.5px" width="16" height="16" viewBox="0 0 16 16"><path d="M13.3 8A5.3 5.3 0 1 1 11.6 4.1" fill="none" stroke="#6a6a6a" stroke-width="1.4" stroke-linecap="round"/><path d="M12.6 1.6v3.5H9.1" fill="none" stroke="#6a6a6a" stroke-width="1.4" stroke-linecap="round" stroke-linejoin="round"/></svg>
<div class="a" style="left:1030px;top:419.5px;width:420px;height:1px;background:#e6e6e6;"></div>

<!-- scrollbar -->
<div class="a" style="left:1441.5px;top:423px;width:6.5px;height:94px;border-radius:3.5px;background:#7a7a7a;"></div>

<!-- back -->
<div class="a" style="left:1045.5px;top:433.5px;width:90px;height:24px;border:1px solid #e2e2e2;border-radius:4px;background:#fbfbfb;"></div>
<svg style="left:1070px;top:440px" width="8" height="12" viewBox="0 0 8 12"><path d="M6.5 1L1.5 6l5 5" fill="none" stroke="#555" stroke-width="1.3" stroke-linecap="round" stroke-linejoin="round"/></svg>
<div class="t" style="left:1089.5px;top:438.5px;font-size:11.5px;line-height:14px;color:#333;font-weight:bold;">Back</div>

<!-- case box -->
<div class="a" style="left:1045.5px;top:467.5px;width:388px;height:49px;border:1px solid #e4e4e4;border-radius:7px;background:#f1f1f1;"></div>
<div class="t" style="left:1061.5px;top:481.5px;font-size:15px;line-height:17px;color:#2b2b2b;font-weight:bold;">kc-word (25/25)</div>
<div class="a" style="left:1196.5px;top:480.5px;width:120px;height:25px;border:1px solid #dcdcdc;border-radius:4px;background:#fbfbfb;"></div>
<svg style="left:1210px;top:485px" width="15" height="16" viewBox="0 0 15 16"><g fill="none" stroke="#666" stroke-width="1.2" stroke-linecap="round" stroke-linejoin="round"><path d="M2.2 9.5A5.5 5.5 0 0 1 9.5 2.6"/><path d="M12.8 6.5A5.5 5.5 0 0 1 5.5 13.4"/><path d="M8.2 .9l1.6 1.7-1.7 1.6"/><path d="M6.8 15.1l-1.6-1.7 1.7-1.6"/></g></svg>
<div class="t m" style="left:1233px;top:486px;font-size:12px;line-height:14px;color:#3a3a3a;">Refresh Case</div>
<div class="a" style="left:1327px;top:480.5px;width:90px;height:25px;border:1px solid #dcdcdc;border-radius:4px;background:#fbfbfb;"></div>
<div class="t m" style="left:1339.5px;top:486px;font-size:12px;line-height:14px;color:#3a3a3a;">Deselect All</div>

<!-- import options -->
<div class="a" style="left:1045px;top:534.5px;width:389px;height:181px;border:1px solid #e6e6e6;border-radius:7px;background:#f5f5f5;box-shadow:0 1px 2px rgba(0,0,0,.05);"></div>
<svg style="left:1062px;top:554.5px" width="12" height="12" viewBox="0 0 12 12"><g fill="none" stroke="#888" stroke-width="1"><path d="M6 .7l1 .2.3 1.3.9.5 1.3-.4.7.8-.4 1.3.5.9 1.3.3.1 1-.1 1-1.3.3-.5.9.4 1.3-.7.8-1.3-.4-.9.5-.3 1.3-1 .2-1-.2-.3-1.3-.9-.5-1.3.4-.7-.8.4-1.3-.5-.9L.8 7 .7 6l.1-1 1.3-.3.5-.9-.4-1.3.7-.8 1.3.4.9-.5.3-1.3z"/><circle cx="6" cy="6" r="1.8"/></g></svg>
<div class="t" style="left:1080.5px;top:552px;font-size:13.5px;line-height:16px;color:#2e2e2e;font-weight:bold;">Import Options</div>
<div class="a" style="left:1068.5px;top:588.5px;width:13px;height:13px;border-radius:50%;border:1.5px solid #7aa0dc;background:#fff;"></div>
<div class="a" style="left:1071.5px;top:591.5px;width:10px;height:10px;border-radius:50%;background:#2d68cc;"></div>
<div class="t m" style="left:1096px;top:588.5px;font-size:13.9px;line-height:16px;color:#3a3a3a;">Append to end</div>
<div class="a" style="left:1068.5px;top:630.5px;width:13.5px;height:13.5px;border-radius:50%;border:1.3px solid #9a9a9a;background:#f6f6f6;"></div>
<div class="t m" style="left:1096px;top:630.5px;font-size:14px;line-height:16px;color:#707070;">Insert at cursor</div>
<div class="a" style="left:1293.5px;top:669px;width:123px;height:29px;border:1px solid #dedede;border-radius:4px;background:#fbfbfb;"></div>
<svg style="left:1313px;top:677px" width="13" height="15" viewBox="0 0 13 15"><path d="M6.5 1v10M2.5 7.2l4 4 4-4M1 14h11" fill="none" stroke="#555" stroke-width="1.2" stroke-linecap="round" stroke-linejoin="round"/></svg>
<div class="t m" style="left:1334px;top:676.5px;font-size:13.9px;line-height:16px;color:#333;">Import (25)</div>

<!-- items -->
<div class="a" style="left:1045px;top:731.5px;width:389px;height:45.5px;border:1px solid #e8e8e8;border-radius:7px;background:#efefef;box-shadow:0 1px 2px rgba(0,0,0,.06);"></div>
<div class="a" style="left:1065.5px;top:748px;width:15px;height:15px;border-radius:2px;background:#1b6fd2;"></div>
<svg style="left:1065.5px;top:748px" width="15" height="15" viewBox="0 0 15 15"><path d="M4 7.6l2.4 2.3 4.6-4.8" fill="none" stroke="#fff" stroke-width="1.6" stroke-linecap="round" stroke-linejoin="round"/></svg>
<div class="t m" style="left:1099.5px;top:748px;font-size:13.1px;line-height:16px;color:#3a3a3a;">External Examination</div>
<div class="a" style="left:1357px;top:746px;width:65.5px;height:19px;border-radius:9.5px;background:#1f8a2c;"></div>
<div class="t" style="left:1357px;top:748.5px;width:65.5px;text-align:center;font-size:12px;line-height:14px;color:#fff;font-weight:bold;">Complete</div>
<div class="a" style="left:1045px;top:782.5px;width:389px;height:31.5px;overflow:hidden;">
  <div class="a" style="left:0;top:0;width:387px;height:60px;border:1px solid #e8e8e8;border-radius:7px;background:#efefef;"></div>
</div>
<div class="a" style="left:1065.5px;top:798px;width:15px;height:15px;border-radius:2px;background:#1b6fd2;"></div>
<svg style="left:1065.5px;top:798px" width="15" height="15" viewBox="0 0 15 15"><path d="M4 7.6l2.4 2.3 4.6-4.8" fill="none" stroke="#fff" stroke-width="1.6" stroke-linecap="round" stroke-linejoin="round"/></svg>
<div class="t m" style="left:1099.5px;top:797.5px;font-size:13.4px;line-height:16px;color:#3a3a3a;">Clothing And Property</div>
<div class="a" style="left:1375.5px;top:796.5px;width:47px;height:16.5px;border-radius:8.25px;background:#f3d600;"></div>
<div class="t" style="left:1375.5px;top:797.5px;width:47px;text-align:center;font-size:11.5px;line-height:14px;color:#4a4200;font-weight:bold;">Partial</div>
<div class="a" style="left:1003px;top:814px;width:469px;height:19px;background:#f9f9f9;"></div>

<!-- ===== STATUS BAR ===== -->
<div class="a" style="left:64px;top:833px;width:1408px;height:22px;background:#d9d9d9;border-radius:0 0 2px 2px;"></div>
<div class="a" style="left:64px;top:833px;width:1408px;height:1px;background:#cbcbcb;"></div>
<div class="t m" style="left:84px;top:837px;font-size:11.7px;line-height:14px;color:#808080;">Page 1 of 5</div>
<div class="t m" style="left:163px;top:837px;font-size:12.3px;line-height:14px;color:#808080;">947 words</div>
<div class="t m" style="left:271.5px;top:837px;font-size:12.1px;line-height:14px;color:#808080;">English (United States)</div>
<div class="t m" style="left:1094px;top:837px;font-size:11.7px;line-height:14px;color:#7e7e7e;">Focus</div>
<div class="t m" style="left:1423px;top:837px;font-size:11.7px;line-height:14px;color:#7e7e7e;">153%</div>


<svg style="left:238px;top:837px" width="17" height="14" viewBox="0 0 17 14"><g fill="none" stroke="#8a8a8a" stroke-width="1.1"><path d="M1 1.5h4.5a2 2 0 0 1 2 2V12H3a2 2 0 0 1-2-2z"/><path d="M7.5 3.5v9"/><path d="M10.5 3l4 4.5M14.5 3l-4 4.5"/></g></svg>
<svg style="left:1070.5px;top:838px" width="16" height="11" viewBox="0 0 16 11"><g fill="none" stroke="#8a8a8a" stroke-width="1.2"><rect x=".8" y=".8" width="14" height="9.5" rx="1"/><path d="M3 3v5M12.6 3v5"/></g></svg>
<div class="a" style="left:1136.5px;top:833px;width:34.5px;height:21px;background:#acacac;"></div>
<div class="a" style="left:1146.5px;top:838px;width:13px;height:11px;border:1px solid #e6e6e6;background:#c2c2c2;border-radius:1px;"></div>
<svg style="left:1180px;top:837.5px" width="17" height="14" viewBox="0 0 17 14"><rect x=".8" y=".8" width="11" height="10" fill="#9a9a9a" stroke="#808080" stroke-width="1"/><circle cx="12" cy="10" r="3.5" fill="#6a6a6a" stroke="#d6d6d6" stroke-width="1"/></svg>
<svg style="left:1216px;top:838px" width="14" height="12" viewBox="0 0 14 12"><g stroke="#9a9a9a" stroke-width="1.2"><path d="M0 1.5h2M4 1.5h10M2 4.5h2M6 4.5h8M2 7.5h2M6 7.5h8M0 10.5h2M4 10.5h10"/></g></svg>
<svg style="left:1250px;top:838.5px" width="14" height="12" viewBox="0 0 14 12"><g stroke="#8a8a8a" stroke-width="1.3"><path d="M0 1h13M0 4h11M0 7h13M0 10h10"/></g></svg>
<div class="a" style="left:1282px;top:843px;width:7px;height:1.6px;background:#7a7a7a;"></div>
<div class="a" style="left:1296.5px;top:842px;width:95px;height:3.3px;border-radius:2px;background:#8f8f8f;"></div>
<div class="a" style="left:1341.5px;top:836.5px;width:15px;height:15px;border-radius:50%;background:#f7f7f7;box-shadow:0 0 1px rgba(0,0,0,.25);"></div>
<div class="a" style="left:1398.5px;top:843px;width:7.5px;height:1.6px;background:#7a7a7a;"></div>
<div class="a" style="left:1401.45px;top:840px;width:1.6px;height:7.5px;background:#7a7a7a;"></div>
<!-- page bottom mark -->
<div class="a" style="left:191px;top:830.5px;width:2.2px;height:2.5px;background:#555;"></div><div class="a" style="left:193px;top:830.5px;width:1.2px;height:1px;background:#888;"></div><div class="a" style="left:197.5px;top:830.5px;width:2.5px;height:2.5px;background:#555;"></div>
<!-- cursor -->
<svg style="left:1282px;top:589px" width="10" height="15" viewBox="0 0 10 15"><path d="M1 1v11.5l3-2.8 2 4.3 1.8-.8-2-4.2h4z" fill="#111" stroke="#fff" stroke-width=".9" stroke-linejoin="round"/></svg>
</div></body></html>
